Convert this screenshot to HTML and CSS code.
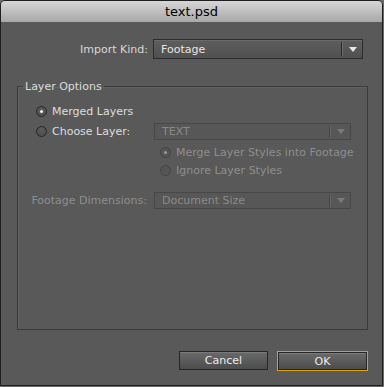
FILE: index.html
```html
<!DOCTYPE html>
<html>
<head>
<meta charset="utf-8">
<link rel="stylesheet" href="styles.css">
</head>
<body>
<div class="window">
  <div class="titlebar">text.psd</div>
  <div class="content">
    <div class="field-row import-row">
      <span class="label">Import Kind:</span>
      <div class="select"><span class="val">Footage</span><span class="sep"></span><span class="arrow"></span></div>
    </div>
    <fieldset class="group">
      <legend>Layer Options</legend>
      <div class="radio-row merged"><span class="radio checked"></span><span>Merged Layers</span></div>
      <div class="choose-row">
        <div class="radio-row"><span class="radio"></span><span>Choose Layer:</span></div>
        <div class="select small disabled"><span class="val">TEXT</span><span class="sep"></span><span class="arrow"></span></div>
      </div>
      <div class="sub">
        <div class="radio-row disabled"><span class="radio checked"></span><span>Merge Layer Styles into Footage</span></div>
        <div class="radio-row disabled"><span class="radio"></span><span>Ignore Layer Styles</span></div>
      </div>
      <div class="field-row dims-row">
        <span class="label disabled">Footage Dimensions:</span>
        <div class="select small disabled"><span class="val">Document Size</span><span class="sep"></span><span class="arrow"></span></div>
      </div>
    </fieldset>
    <div class="buttons">
      <button class="btn">Cancel</button>
      <button class="btn default">OK</button>
    </div>
  </div>
</div>
</body>
</html>
```
FILE: styles.css
```css
html, body {
  margin: 0;
  padding: 0;
  background: #6a6a6a;
  width: 384px;
  height: 387px;
  overflow: hidden;
}
body {
  font-family: "DejaVu Sans", sans-serif;
  font-size: 11px;
}
.window {
  box-sizing: border-box;
  width: 383px;
  height: 386px;
  border: 1px solid #1e1e1e;
  border-radius: 5px 5px 0 0;
  background: #595959;
  overflow: hidden;
  display: flex;
  flex-direction: column;
}
.titlebar {
  height: 21px;
  flex: none;
  background: linear-gradient(#d6d6d6, #a8a8a8);
  color: #000;
  font-size: 13px;
  text-align: center;
  line-height: 22px;
}
.content {
  display: flex;
  flex-direction: column;
  flex: 1;
}
.field-row {
  display: grid;
  grid-template-columns: 147px 1fr;
  column-gap: 5px;
  align-items: center;
}
.label {
  text-align: right;
  color: #d8d8d8;
}
.label.disabled { color: #8e8e8e; }
.import-row {
  margin-top: 17px;
  width: 362px;
}
.select {
  box-sizing: border-box;
  height: 20px;
  border: 1px solid #2c2c2c;
  box-shadow: inset 0 1px 0 #6a6a6a;
  background: linear-gradient(#5e5e5e, #505050);
  display: flex;
  align-items: center;
  color: #e6e6e6;
}
.select .val {
  flex: 1;
  padding-left: 7px;
}
.select .sep {
  width: 1px;
  height: 14px;
  background: #2a2a2a;
  box-shadow: 1px 0 0 #6c6c6c;
  margin-right: 7px;
}
.select .arrow {
  width: 0;
  height: 0;
  border-left: 4px solid transparent;
  border-right: 4px solid transparent;
  border-top: 5px solid #e8e8e8;
  margin-right: 5px;
}
.select.small {
  height: 17px;
}
.select.disabled {
  border-color: #474747;
  box-shadow: none;
  background: #575757;
  color: #8a8a8a;
}
.select.disabled .sep {
  background: #454545;
  box-shadow: 1px 0 0 #666;
  height: 12px;
}
.select.disabled .arrow {
  border-top-color: #7a7a7a;
}
.group {
  box-sizing: border-box;
  margin: 21px 0 0 16px;
  width: 351px;
  height: 250px;
  padding: 0;
  border: 1px solid #3a3a3a;
  box-shadow: inset 1px 1px 0 #636363;
}
.group legend {
  color: #dcdcdc;
  padding: 0 2px;
  margin-left: 5px;
}
.radio-row {
  display: flex;
  align-items: center;
  color: #dedede;
}
.radio-row.disabled { color: #8e8e8e; }
.radio {
  box-sizing: border-box;
  width: 11px;
  height: 11px;
  border-radius: 50%;
  border: 1px solid #262626;
  background: radial-gradient(circle at 50% 30%, #5c5c5c, #4a4a4a);
  margin-right: 5px;
  display: flex;
  align-items: center;
  justify-content: center;
}
.radio.checked::after {
  content: "";
  width: 3px;
  height: 3px;
  border-radius: 50%;
  background: #f0f0f0;
}
.radio-row.disabled .radio {
  border-color: #444;
  background: #555;
}
.radio-row.disabled .radio.checked::after {
  background: #9a9a9a;
}
.merged {
  margin: 12px 0 0 18px;
}
.choose-row {
  display: flex;
  align-items: center;
  margin-top: 5px;
}
.choose-row .radio-row {
  margin-left: 18px;
  width: 118px;
}
.choose-row .select {
  width: 197px;
}
.sub {
  display: flex;
  flex-direction: column;
  gap: 5px;
  margin: 6px 0 0 142px;
}
.dims-row {
  grid-template-columns: 130px 197px;
  column-gap: 7px;
  margin-left: -1px;
  margin-top: 15px;
}
.buttons {
  display: flex;
  gap: 10px;
  margin: 21px 0 0 178px;
}
.btn {
  box-sizing: border-box;
  width: 89px;
  height: 19px;
  border: 1px solid #262626;
  background: linear-gradient(#6a6a6a, #4c4c4c);
  box-shadow: inset 0 1px 0 #7a7a7a;
  color: #ececec;
  font-family: "DejaVu Sans", sans-serif;
  font-size: 11px;
  padding: 0;
}
.btn.default {
  outline: 1px solid #e0a200;
  outline-offset: 0;
  height: 18px;
  margin-top: 1px;
}
```
